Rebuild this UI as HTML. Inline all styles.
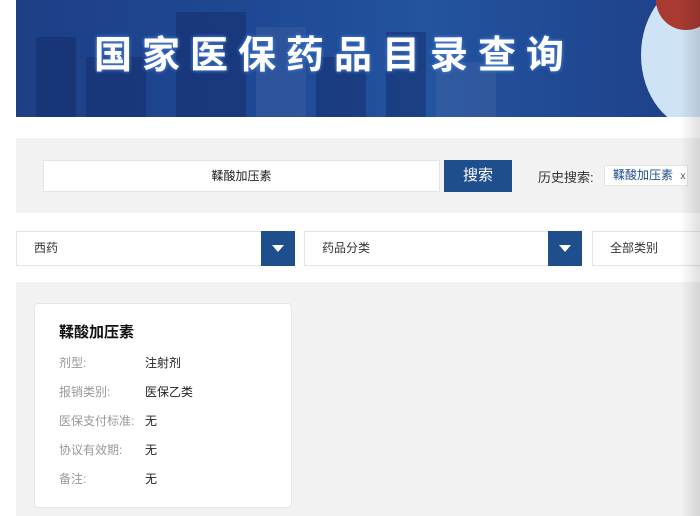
<!DOCTYPE html>
<html><head><meta charset="utf-8"><style>
*{margin:0;padding:0;box-sizing:border-box}
body{width:700px;height:516px;overflow:hidden;background:#fff;position:relative;font-family:"Liberation Sans","Noto Sans CJK SC",sans-serif;}
.abs{position:absolute}
#banner{left:16px;top:0;width:684px;height:117px;background:linear-gradient(90deg,#1d3f86 0%,#1f4a96 40%,#23549f 60%,#1e3f88 100%);overflow:hidden}
.bld{position:absolute;bottom:0;background:rgba(20,40,100,.45)}
#title{left:94px;top:24px;font-size:38px;font-weight:bold;color:#fff;letter-spacing:10px;text-shadow:0 0 3px #4b7fd0,0 0 5px #3a6cc0;font-family:"Noto Sans CJK SC",sans-serif}
.gray{background:#f2f2f2}
.box{background:#fff;border:1px solid #e4e4e4}
.dd{height:35px;top:231px;font-size:12px;color:#333;line-height:33px;padding-left:17px}
.arr{position:absolute;top:-1px;width:34px;height:35px;background:#1f4e8c}
.arr:after{content:"";position:absolute;left:11px;top:14px;border-left:6px solid transparent;border-right:6px solid transparent;border-top:7px solid #fff}
.lab{left:59px;font-size:12px;color:#999}
.val{left:145px;font-size:12px;color:#222}
</style></head><body>
<div id="banner" class="abs">
<div class="bld" style="left:20px;width:40px;height:80px"></div>
<div class="bld" style="left:70px;width:60px;height:60px"></div>
<div class="bld" style="left:160px;width:70px;height:105px"></div>
<div class="bld" style="left:240px;width:50px;height:90px;background:rgba(80,110,170,.3)"></div>
<div class="bld" style="left:300px;width:50px;height:60px"></div>
<div class="bld" style="left:370px;width:40px;height:85px"></div>
<div class="bld" style="left:420px;width:60px;height:55px;background:rgba(80,110,170,.3)"></div>
<div class="abs" style="left:625px;top:-20px;width:120px;height:150px;border-radius:50%;background:#cfe3f6"></div>
<div class="abs" style="left:640px;top:0;width:60px;height:30px;border-radius:0 0 30px 30px;background:#a83a32"></div>
</div>
<div id="title" class="abs">国家医保药品目录查询</div>
<div class="abs gray" style="left:16px;top:138px;width:684px;height:75px"></div>
<div class="abs box" style="left:43px;top:160px;width:397px;height:32px;text-align:center;font-size:12px;line-height:30px;color:#222">鞣酸加压素</div>
<div class="abs" style="left:444px;top:160px;width:68px;height:32px;background:#1f4e8c;color:#fff;font-size:15px;text-align:center;line-height:32px">搜索</div>
<div class="abs" style="left:538px;top:167px;font-size:13px;color:#333">历史搜索:</div>
<div class="abs box" style="left:604px;top:165px;width:84px;height:21px;font-size:12px;color:#1f4e8c;line-height:19px;padding-left:8px">鞣酸加压素 <span style="color:#555;font-size:10px;margin-left:4px">x</span></div>
<div class="abs box dd" style="left:16px;width:279px">西药<div class="arr" style="right:-1px"></div></div>
<div class="abs box dd" style="left:304px;width:278px">药品分类<div class="arr" style="right:-1px"></div></div>
<div class="abs box dd" style="left:592px;width:120px">全部类别</div>
<div class="abs gray" style="left:16px;top:282px;width:684px;height:234px"></div>
<div class="abs" style="left:34px;top:303px;width:258px;height:205px;background:#fff;border:1px solid #e6e6e6;border-radius:4px"></div>
<div class="abs" style="left:59px;top:321px;font-size:15px;font-weight:bold;color:#111">鞣酸加压素</div>
<div class="abs lab" style="top:354px">剂型:</div><div class="abs val" style="top:354px">注射剂</div>
<div class="abs lab" style="top:383px">报销类别:</div><div class="abs val" style="top:383px">医保乙类</div>
<div class="abs lab" style="top:412px">医保支付标准:</div><div class="abs val" style="top:412px">无</div>
<div class="abs lab" style="top:441px">协议有效期:</div><div class="abs val" style="top:441px">无</div>
<div class="abs lab" style="top:470px">备注:</div><div class="abs val" style="top:470px">无</div>
<div class="abs" style="left:680px;top:0;width:20px;height:516px;background:linear-gradient(90deg,rgba(0,0,0,0),rgba(0,0,0,.12))"></div>
</body></html>
